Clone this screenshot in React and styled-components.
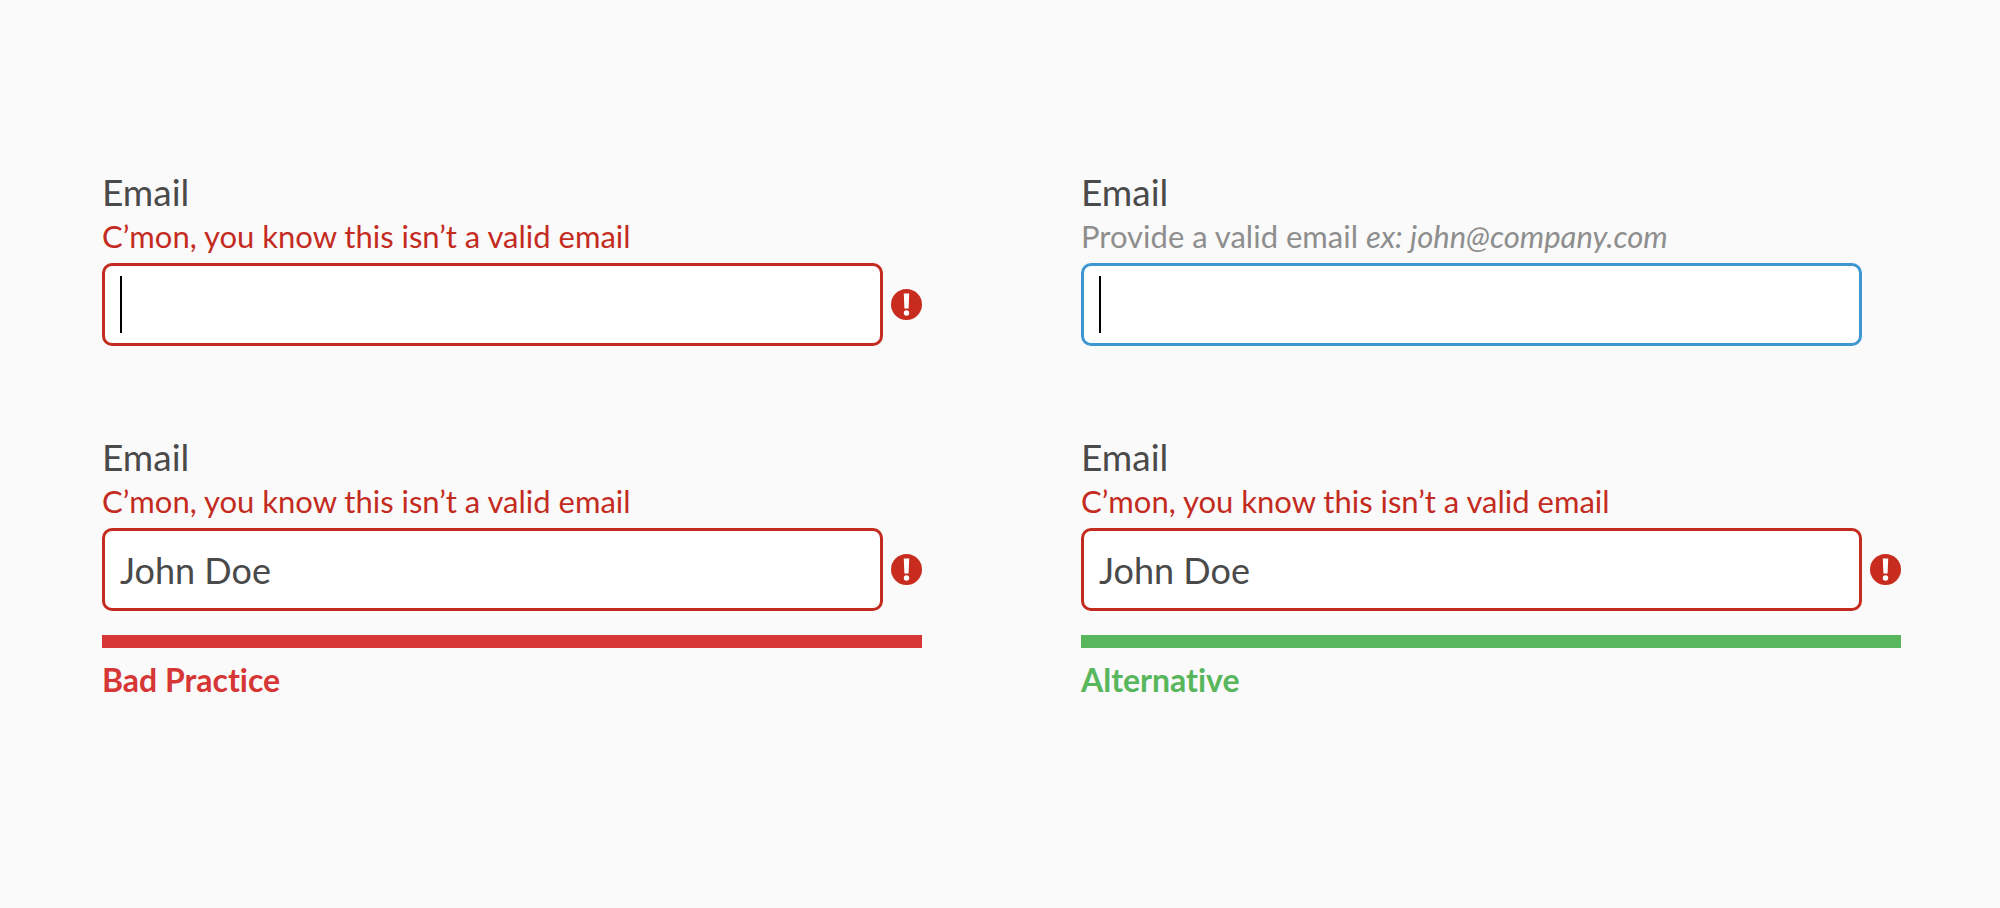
import React from 'react';
import styled, { createGlobalStyle } from 'styled-components';

const GlobalStyle = createGlobalStyle`
  *, *::before, *::after { box-sizing: border-box; }
  body {
    margin: 0;
    background: #fafafa;
    color: #4a4a4a;
    font-family: Lato, "Open Sans", sans-serif;
    font-variant-ligatures: none;
  }
`;

const tones = {
  error: '#c42b1f',
  info: '#3e97d1',
  bad: '#d63635',
  good: '#58b65c',
};

const Comparison = styled.main`
  display: grid;
  grid-template-columns: 1fr 1fr;
  gap: 159px;
  min-height: 100vh;
  padding: 170px 99px 169px 102px;
  align-items: start;
`;

const Example = styled.figure`
  margin: 0;
`;

const Fields = styled.div`
  display: flex;
  flex-direction: column;
  gap: 89px;
`;

const Field = styled.div`
  display: flex;
  flex-direction: column;
`;

const Label = styled.label`
  font-size: 37px;
  line-height: 44px;
`;

const Hint = styled.p`
  margin: 0 0 5px;
  font-size: 31px;
  line-height: 44px;
  color: ${({ $error }) => ($error ? tones.error : '#8e8e8e')};
`;

const Control = styled.div`
  display: grid;
  grid-template-columns: 1fr 31px;
  gap: 8px;
  align-items: center;
`;

const InputWrap = styled.div`
  position: relative;
  display: flex;
`;

const Input = styled.input`
  width: 100%;
  min-width: 0;
  height: 83px;
  padding: 0 15px;
  border: 3px solid ${({ $error }) => ($error ? tones.error : tones.info)};
  border-radius: 10px;
  outline: none;
  background: #fff;
  color: inherit;
  font-family: inherit;
  font-size: 36px;
`;

const Caret = styled.span`
  position: absolute;
  top: 13px;
  bottom: 13px;
  left: 18px;
  width: 2px;
  background: #000;
  pointer-events: none;
`;

const Badge = styled.svg`
  display: block;
  width: 31px;
  height: 31px;
`;

const Verdict = styled.figcaption`
  margin-top: 24px;
  padding-top: 10px;
  border-top: 13px solid ${({ $tone }) => tones[$tone]};
  color: ${({ $tone }) => tones[$tone]};
  font-size: 32px;
  font-weight: 700;
  line-height: 44px;
`;

function ErrorBadge() {
  return (
    <Badge viewBox="0 0 31 31" role="img" aria-label="Error">
      <circle cx="15.5" cy="15.5" r="15.5" fill="#c82c1f" />
      <path d="M12.8 4.4h5.4l-.6 15.2h-4.2z" fill="#fff" />
      <circle cx="15.5" cy="24" r="2.7" fill="#fff" />
    </Badge>
  );
}

function EmailField({ id, value = '', error, focused, children }) {
  return (
    <Field>
      <Label htmlFor={id}>Email</Label>
      <Hint id={`${id}-hint`} $error={error}>{children}</Hint>
      <Control>
        <InputWrap>
          <Input
            id={id}
            type="text"
            defaultValue={value}
            aria-describedby={`${id}-hint`}
            aria-invalid={error}
            $error={error}
          />
          {focused && <Caret />}
        </InputWrap>
        {error && <ErrorBadge />}
      </Control>
    </Field>
  );
}

const invalidMessage = 'C’mon, you know this isn’t a valid email';

export default function App() {
  return (
    <>
      <GlobalStyle />
      <Comparison>
        <Example>
          <Fields>
            <EmailField id="bad-empty" error focused>{invalidMessage}</EmailField>
            <EmailField id="bad-filled" value="John Doe" error>{invalidMessage}</EmailField>
          </Fields>
          <Verdict $tone="bad">Bad Practice</Verdict>
        </Example>
        <Example>
          <Fields>
            <EmailField id="good-empty" error={false} focused>
              Provide a valid email <em>ex: john@company.com</em>
            </EmailField>
            <EmailField id="good-filled" value="John Doe" error>{invalidMessage}</EmailField>
          </Fields>
          <Verdict $tone="good">Alternative</Verdict>
        </Example>
      </Comparison>
    </>
  );
}
